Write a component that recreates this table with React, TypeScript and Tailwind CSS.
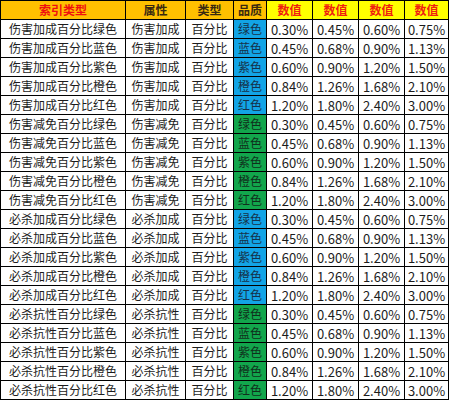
const qualities = ["绿色", "蓝色", "紫色", "橙色", "红色"];
const values = [
  ["0.30%", "0.45%", "0.60%", "0.75%"],
  ["0.45%", "0.68%", "0.90%", "1.13%"],
  ["0.60%", "0.90%", "1.20%", "1.50%"],
  ["0.84%", "1.26%", "1.68%", "2.10%"],
  ["1.20%", "1.80%", "2.40%", "3.00%"],
];
const groups = [
  { attr: "伤害加成", blue: true },
  { attr: "伤害减免", blue: false },
  { attr: "必杀加成", blue: true },
  { attr: "必杀抗性", blue: false },
];

const cell = "flex items-center justify-center bg-white h-[18px] leading-none";

export default function App() {
  return (
    <div className="w-[450px] h-[400px] bg-white overflow-hidden" style={{ fontFamily: '"Noto Sans CJK SC", "Noto Sans", sans-serif' }}>
      <div className="grid w-[449px] grid-cols-[124px_59px_47px_32px_45px_45px_45px_43px] gap-px bg-black p-px text-[12px] text-[#1c1c1c]">
        <div className="flex h-[18px] items-center justify-center bg-[#ffc000] font-bold text-[#f01010]">索引类型</div>
        <div className="flex h-[18px] items-center justify-center bg-[#ffc000] font-bold text-[#3a2a10]">属性</div>
        <div className="flex h-[18px] items-center justify-center bg-[#ffc000] font-bold text-[#3a2a10]">类型</div>
        <div className="flex h-[18px] items-center justify-center bg-[#ffc000] font-bold text-[#3a2a10]">品质</div>
        {[0, 1, 2, 3].map((i) => (
          <div key={i} className="flex h-[18px] items-center justify-center bg-[#ffff00] font-bold text-[#f02010]">
            数值
          </div>
        ))}
        {groups.map((g) =>
          qualities.map((q, qi) => (
            <div key={g.attr + q} className="contents">
              <div className={cell}>{g.attr}百分比{q}</div>
              <div className={cell}>{g.attr}</div>
              <div className={cell}>百分比</div>
              <div
                className={
                  g.blue
                    ? "flex h-[18px] items-center justify-center bg-[#12a4e6] text-[#16324a]"
                    : "flex h-[18px] items-center justify-center bg-[#12a64c] text-[#10301c]"
                }
              >
                {q}
              </div>
              {values[qi].map((v, vi) => (
                <div key={vi} className={`${cell} text-[13px]`}>
                  {v}
                </div>
              ))}
            </div>
          ))
        )}
      </div>
    </div>
  );
}
